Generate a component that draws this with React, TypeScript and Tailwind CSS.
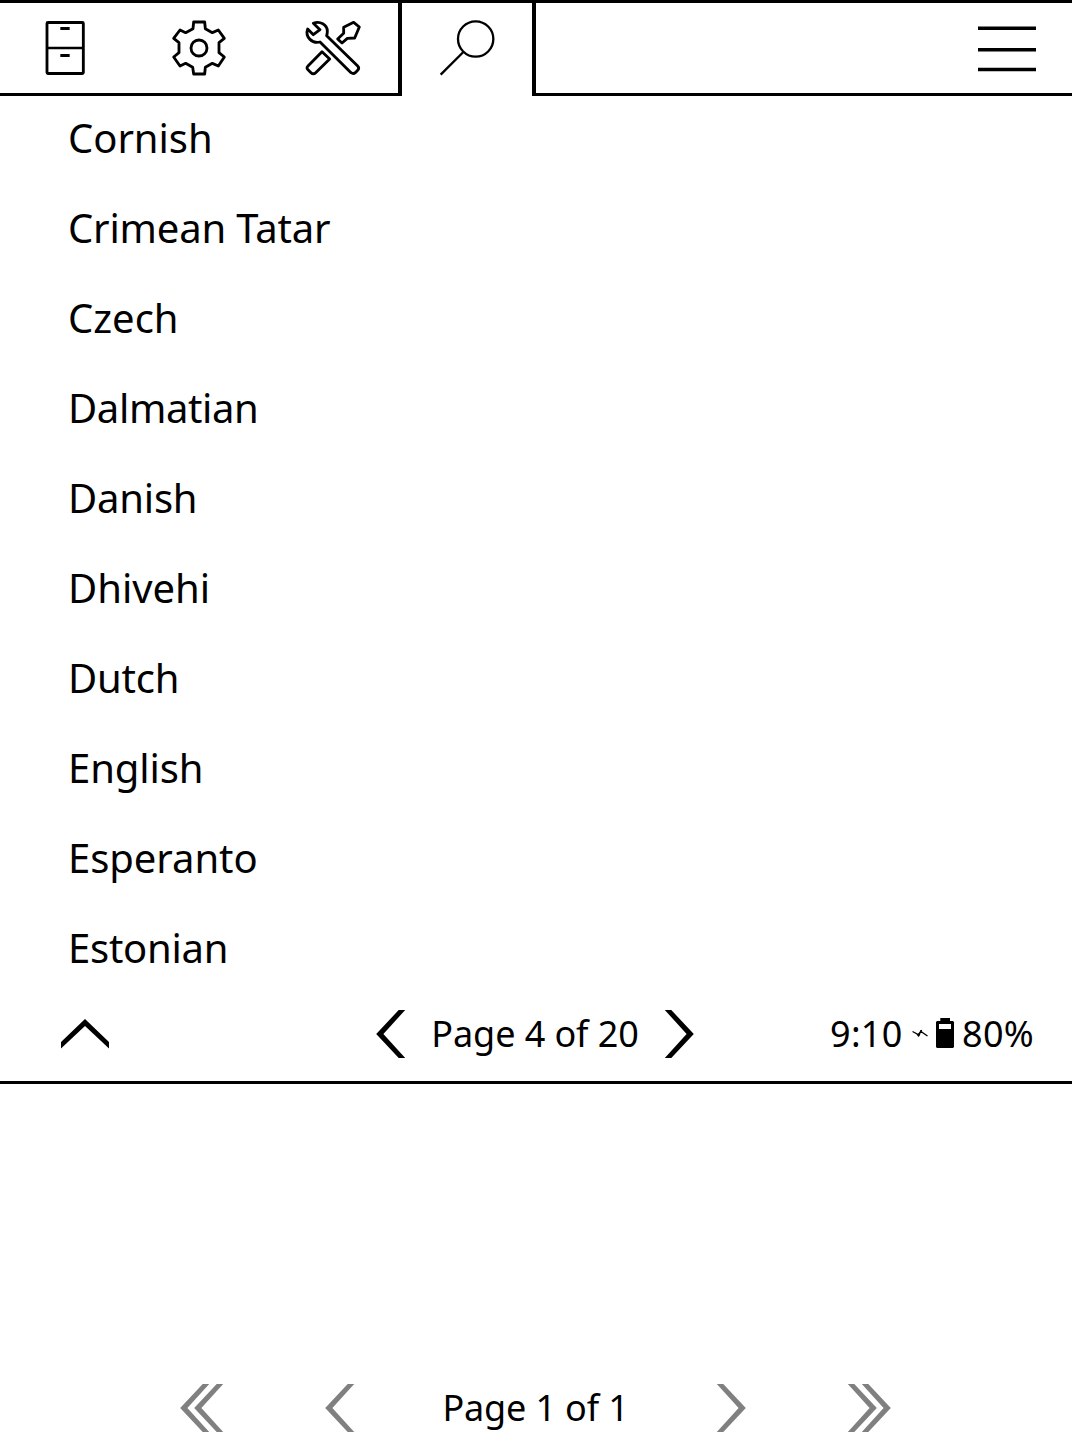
import type { ReactNode } from "react";

const languages = [
  { name: "Cornish", tracking: "tracking-[-0.05px]" },
  { name: "Crimean Tatar", tracking: "tracking-[-0.17px]" },
  { name: "Czech", tracking: "tracking-normal" },
  { name: "Dalmatian", tracking: "tracking-[-0.36px]" },
  { name: "Danish", tracking: "tracking-[-0.2px]" },
  { name: "Dhivehi", tracking: "tracking-normal" },
  { name: "Dutch", tracking: "tracking-[-0.2px]" },
  { name: "English", tracking: "tracking-[-0.1px]" },
  { name: "Esperanto", tracking: "tracking-[-0.05px]" },
  { name: "Estonian", tracking: "tracking-[-0.25px]" },
];

function Icon({ viewBox, children }: { viewBox: string; children: ReactNode }) {
  return (
    <svg className="size-[60px]" viewBox={viewBox} fill="none" stroke="black" strokeWidth={8.5} strokeLinejoin="round">
      {children}
    </svg>
  );
}

const Cabinet = () => (
  <Icon viewBox="0 0 180 180">
    <rect x="36" y="13.5" width="109" height="153" rx="3" />
    <path d="M36 90H145" strokeWidth={8} />
    <path d="M76 31.5H104M76 112.5H104" strokeWidth={9} />
  </Icon>
);

const Gear = () => (
  <Icon viewBox="27 30 180 180">
    <circle cx="117" cy="120" r="24" />
    <path d="M101 42H134L136 62L157 74L175 66L193 91L177 104V134L193 147L175 174L157 166L136 178L134 198H101L98 178L77 166L60 174L41 147L57 134V104L41 91L60 66L77 74L99 62Z" />
  </Icon>
);

const Tools = () => (
  <Icon viewBox="33 30 180 180">
    <path d="M64 46C84 38 106 50 106 70Q106 77 104 83L197 174Q203 180 197 187L190 194Q184 199 177 194L84 102C62 108 38 88 47 63L64 80L84 65Z" />
    <path d="M185 43L202 57L188 90L166 91L150 105L137 93L155 76V58Z" />
    <path d="M90 131L113 153L71 194Q64 201 57 194L48 185Q42 180 48 174Z" />
  </Icon>
);

const Search = () => (
  <Icon viewBox="141 54 180 180">
    <circle cx="257" cy="117" r="53" strokeWidth={7} />
    <path d="M220 156L152 224" strokeWidth={7} />
  </Icon>
);

function Chevron({ right = false, double = false }: { right?: boolean; double?: boolean }) {
  const points = "0.2,24 22.7,0 29.2,0 7.4,24 29.2,48 22.7,48";
  return (
    <svg
      className={`h-12 shrink-0 fill-current ${double ? "w-[44px]" : "w-[30px]"} ${right ? "-scale-x-100" : ""}`}
      viewBox={double ? "0 0 44 48" : "0 0 30 48"}
    >
      <polygon points={points} />
      {double && <polygon points={points} transform="translate(14 0)" />}
    </svg>
  );
}

export default function App() {
  return (
    <div className="flex h-[1448px] w-[1072px] flex-col overflow-hidden bg-white font-['Noto_Sans',sans-serif] text-black">
      <header className="flex h-24 shrink-0 border-t-[3px] border-black">
        <div className="flex w-[398px] gap-1 border-b-[3px] border-black">
          <div className="flex w-[130px] items-center justify-center"><Cabinet /></div>
          <div className="flex w-[130px] items-center justify-center"><Gear /></div>
          <div className="flex w-[130px] items-center justify-center"><Tools /></div>
        </div>
        <div className="flex w-[138px] justify-center border-x-4 border-black pt-[15px]"><Search /></div>
        <div className="flex flex-1 items-center justify-end border-b-[3px] border-black pr-9">
          <svg className="h-[60px] w-[58px]" viewBox="0 0 58 60">
            <path d="M0 10.2H58M0 31.8H58M0 51.5H58" stroke="black" strokeWidth="3.6" />
          </svg>
        </div>
      </header>

      <ul className="shrink-0">
        {languages.map(({ name, tracking }) => (
          <li
            key={name}
            className={`flex h-[90px] items-center pb-1.5 pl-[68px] text-[40px] leading-none whitespace-nowrap ${tracking}`}
          >
            {name}
          </li>
        ))}
      </ul>

      <div className="flex h-[88px] shrink-0 items-center border-b-[3px] border-black pb-[9px] pl-[61px] text-[36px] leading-none whitespace-nowrap">
        <svg className="h-[30px] w-12" viewBox="0 0 48 30">
          <polygon points="24,0 48,23 48,29.5 24,7 0,29.5 0,23" />
        </svg>
        <div className="ml-[267px] flex w-[318px] items-center justify-between">
          <Chevron />
          <span className="tracking-[-0.08px]">Page 4 of 20</span>
          <Chevron right />
        </div>
        <div className="ml-[136px] flex items-center">
          <span className="w-[73px] tracking-[0.3px]">9:10</span>
          <svg className="mb-0.5 ml-[9px] h-[30px] w-[42px]" viewBox="0 0 42 30" fill="none">
            <path d="M0.5 13.5L7.2 17L8.6 13.2L15.5 18M5 16L7 18.5M5.8 17.2L9.8 12.2" stroke="black" strokeWidth="1.3" />
            <path fillRule="evenodd" fill="black" d="M28.3 0H38V3H41L42 4V29L41 30H25L24 29V4L25 3H28.3ZM27 6V11H39V6Z" />
          </svg>
          <span className="ml-2 tracking-[0.3px]">80%</span>
        </div>
      </div>

      <nav className="mt-[300px] flex h-12 shrink-0 items-center pl-[180px] text-[36px] leading-none whitespace-nowrap text-[#808080]">
        <Chevron double />
        <div className="ml-[101px] flex w-[421px] items-center justify-between">
          <Chevron />
          <span className="tracking-[-0.15px] text-black">Page 1 of 1</span>
          <Chevron right />
        </div>
        <div className="ml-[101px] flex"><Chevron right double /></div>
      </nav>
    </div>
  );
}
